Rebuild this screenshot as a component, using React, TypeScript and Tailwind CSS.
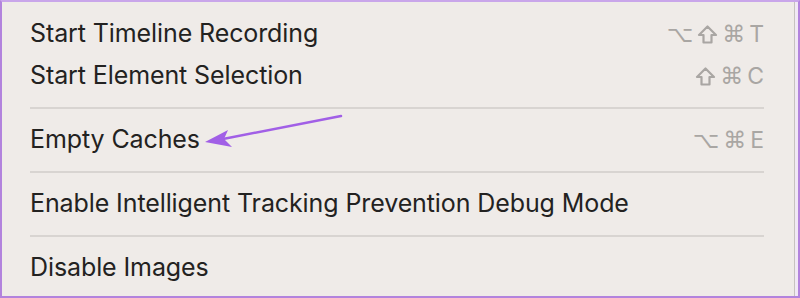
const font = { fontFamily: "Inter, 'Noto Sans', 'DejaVu Sans', sans-serif" };

function Row({ label, keys }: { label: string; keys?: string[] }) {
  return (
    <div className="flex h-[42px] items-center justify-between">
      <span className="text-[25px] tracking-[-0.1px] text-[#232221]">{label}</span>
      {keys && (
        <span className="flex items-center gap-[4px] text-[23px] text-[#a9a6a3]">
          {keys.map((k, i) =>
            k === "⇧" ? (
              <svg key={i} width="21" height="21" viewBox="0 0 21 21" className="mt-[1px]">
                <path
                  d="M10.5 2.5 L19 11 H14.5 V18.5 H6.5 V11 H2 Z"
                  fill="none"
                  stroke="#a9a6a3"
                  strokeWidth="2.2"
                  strokeLinejoin="round"
                />
              </svg>
            ) : (
              <span key={i} className={i === keys.length - 1 ? "" : "font-['DejaVu_Sans']"}>
                {k}
              </span>
            )
          )}
        </span>
      )}
    </div>
  );
}

function Separator() {
  return <div className="my-[10px] h-[2px] bg-[#d8d4d1]" />;
}

export default function App() {
  return (
    <div
      className="h-[298px] w-[800px] overflow-hidden border-2 border-t-[#c9a6ea] border-[#b283dd] bg-[#f1e8f5] pr-[3px]"
      style={font}
    >
      <div className="relative h-full border-r border-[#c6c2bf] bg-[#efebe8] pt-[11px] pl-[28px] pr-[30px]">
        <Row label="Start Timeline Recording" keys={["⌥", "⇧", "⌘", "T"]} />
        <Row label="Start Element Selection" keys={["⇧", "⌘", "C"]} />
        <Separator />
        <Row label="Empty Caches" keys={["⌥", "⌘", "E"]} />
        <Separator />
        <Row label="Enable Intelligent Tracking Prevention Debug Mode" />
        <Separator />
        <Row label="Disable Images" />

        {/* annotation arrow */}
        <svg
          className="absolute left-[199px] top-[107px]"
          width="150"
          height="40"
          viewBox="0 0 150 40"
        >
          <path d="M140 7 L22 30" stroke="#a15fe6" strokeWidth="2.5" strokeLinecap="round" />
          <path d="M4 33 L27 21 L23 30 L31 38 Z" fill="#a15fe6" />
        </svg>
      </div>
    </div>
  );
}
